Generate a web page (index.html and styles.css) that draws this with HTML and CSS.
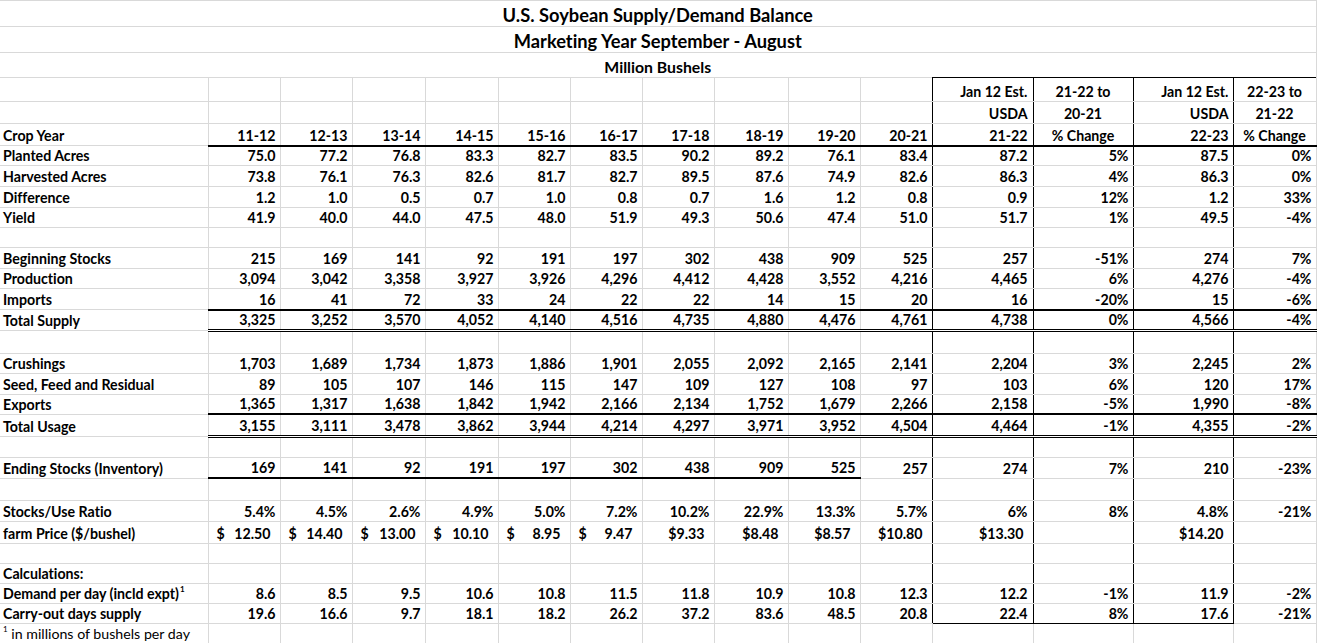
FILE: index.html
```html
<!DOCTYPE html>
<html>
<head>
<meta charset="utf-8">
<title>U.S. Soybean Supply/Demand Balance</title>
<link rel="stylesheet" href="styles.css">
</head>
<body>
<table class="sheet">
<colgroup>
<col class="w208"><col class="w72"><col class="w72"><col class="w73"><col class="w73"><col class="w72"><col class="w72"><col class="w72"><col class="w74"><col class="w72"><col class="w72"><col class="w101"><col class="w100"><col class="w100"><col class="w83">
</colgroup>
<thead>
<tr class="h26 t1"><td colspan="15">U.S. Soybean Supply/Demand Balance</td></tr>
<tr class="h26 t1"><td colspan="15">Marketing Year September - August</td></tr>
<tr class="h25 t3"><td colspan="15">Million Bushels</td></tr>
</thead>
<tbody>
<tr class="bx first h24"><td class="lbl"></td><td></td><td></td><td></td><td></td><td></td><td></td><td></td><td></td><td></td><td></td><td class="pl">Jan 12 Est.</td><td class="c">21-22 to</td><td>Jan 12 Est.</td><td class="c">22-23 to</td></tr>
<tr class="bx h22"><td class="lbl"></td><td></td><td></td><td></td><td></td><td></td><td></td><td></td><td></td><td></td><td></td><td class="pl">USDA</td><td class="c">20-21</td><td>USDA</td><td class="c">21-22</td></tr>
<tr class="bx h22 under"><td class="lbl">Crop Year</td><td>11-12</td><td>12-13</td><td>13-14</td><td>14-15</td><td>15-16</td><td>16-17</td><td>17-18</td><td>18-19</td><td>19-20</td><td>20-21</td><td class="pl">21-22</td><td class="c">% Change</td><td>22-23</td><td class="c">% Change</td></tr>
<tr class="bx h20"><td class="lbl">Planted Acres</td><td>75.0</td><td>77.2</td><td>76.8</td><td>83.3</td><td>82.7</td><td>83.5</td><td>90.2</td><td>89.2</td><td>76.1</td><td>83.4</td><td class="pl">87.2</td><td>5%</td><td>87.5</td><td>0%</td></tr>
<tr class="bx h21"><td class="lbl">Harvested Acres</td><td>73.8</td><td>76.1</td><td>76.3</td><td>82.6</td><td>81.7</td><td>82.7</td><td>89.5</td><td>87.6</td><td>74.9</td><td>82.6</td><td class="pl">86.3</td><td>4%</td><td>86.3</td><td>0%</td></tr>
<tr class="bx h21"><td class="lbl">Difference</td><td>1.2</td><td>1.0</td><td>0.5</td><td>0.7</td><td>1.0</td><td>0.8</td><td>0.7</td><td>1.6</td><td>1.2</td><td>0.8</td><td class="pl">0.9</td><td>12%</td><td>1.2</td><td>33%</td></tr>
<tr class="bx h20"><td class="lbl">Yield</td><td>41.9</td><td>40.0</td><td>44.0</td><td>47.5</td><td>48.0</td><td>51.9</td><td>49.3</td><td>50.6</td><td>47.4</td><td>51.0</td><td class="pl">51.7</td><td>1%</td><td>49.5</td><td>-4%</td></tr>
<tr class="bx h20"><td class="lbl"></td><td></td><td></td><td></td><td></td><td></td><td></td><td></td><td></td><td></td><td></td><td></td><td></td><td></td><td></td></tr>
<tr class="bx h21"><td class="lbl">Beginning Stocks</td><td>215</td><td>169</td><td>141</td><td>92</td><td>191</td><td>197</td><td>302</td><td>438</td><td>909</td><td>525</td><td class="pl">257</td><td>-51%</td><td>274</td><td>7%</td></tr>
<tr class="bx h20"><td class="lbl">Production</td><td>3,094</td><td>3,042</td><td>3,358</td><td>3,927</td><td>3,926</td><td>4,296</td><td>4,412</td><td>4,428</td><td>3,552</td><td>4,216</td><td class="pl">4,465</td><td>6%</td><td>4,276</td><td>-4%</td></tr>
<tr class="bx h21"><td class="lbl">Imports</td><td>16</td><td>41</td><td>72</td><td>33</td><td>24</td><td>22</td><td>22</td><td>14</td><td>15</td><td>20</td><td class="pl">16</td><td>-20%</td><td>15</td><td>-6%</td></tr>
<tr class="bx h20 total"><td class="lbl">Total Supply</td><td>3,325</td><td>3,252</td><td>3,570</td><td>4,052</td><td>4,140</td><td>4,516</td><td>4,735</td><td>4,880</td><td>4,476</td><td>4,761</td><td class="pl">4,738</td><td>0%</td><td>4,566</td><td>-4%</td></tr>
<tr class="bx h23"><td class="lbl"></td><td></td><td></td><td></td><td></td><td></td><td></td><td></td><td></td><td></td><td></td><td></td><td></td><td></td><td></td></tr>
<tr class="bx h20"><td class="lbl">Crushings</td><td>1,703</td><td>1,689</td><td>1,734</td><td>1,873</td><td>1,886</td><td>1,901</td><td>2,055</td><td>2,092</td><td>2,165</td><td>2,141</td><td class="pl">2,204</td><td>3%</td><td>2,245</td><td>2%</td></tr>
<tr class="bx h21"><td class="lbl">Seed, Feed and Residual</td><td>89</td><td>105</td><td>107</td><td>146</td><td>115</td><td>147</td><td>109</td><td>127</td><td>108</td><td>97</td><td class="pl">103</td><td>6%</td><td>120</td><td>17%</td></tr>
<tr class="bx h20"><td class="lbl">Exports</td><td>1,365</td><td>1,317</td><td>1,638</td><td>1,842</td><td>1,942</td><td>2,166</td><td>2,134</td><td>1,752</td><td>1,679</td><td>2,266</td><td class="pl">2,158</td><td>-5%</td><td>1,990</td><td>-8%</td></tr>
<tr class="bx h22 total"><td class="lbl">Total Usage</td><td>3,155</td><td>3,111</td><td>3,478</td><td>3,862</td><td>3,944</td><td>4,214</td><td>4,297</td><td>3,971</td><td>3,952</td><td>4,504</td><td class="pl">4,464</td><td>-1%</td><td>4,355</td><td>-2%</td></tr>
<tr class="bx h21"><td class="lbl"></td><td></td><td></td><td></td><td></td><td></td><td></td><td></td><td></td><td></td><td></td><td></td><td></td><td></td><td></td></tr>
<tr class="bx h21 ending"><td class="lbl">Ending Stocks (Inventory)</td><td>169</td><td>141</td><td>92</td><td>191</td><td>197</td><td>302</td><td>438</td><td>909</td><td>525</td><td>257</td><td class="pl">274</td><td>7%</td><td>210</td><td>-23%</td></tr>
<tr class="bx h22"><td class="lbl"></td><td></td><td></td><td></td><td></td><td></td><td></td><td></td><td></td><td></td><td></td><td></td><td></td><td></td><td></td></tr>
<tr class="bx h21"><td class="lbl">Stocks/Use Ratio</td><td>5.4%</td><td>4.5%</td><td>2.6%</td><td>4.9%</td><td>5.0%</td><td>7.2%</td><td>10.2%</td><td>22.9%</td><td>13.3%</td><td>5.7%</td><td class="pl">6%</td><td>8%</td><td>4.8%</td><td>-21%</td></tr>
<tr class="bx h22"><td class="lbl">farm Price ($/bushel)</td>
<td><div class="acct"><span>$</span><span>12.50</span></div></td>
<td><div class="acct"><span>$</span><span>14.40</span></div></td>
<td><div class="acct"><span>$</span><span>13.00</span></div></td>
<td><div class="acct"><span>$</span><span>10.10</span></div></td>
<td><div class="acct"><span>$</span><span>8.95</span></div></td>
<td><div class="acct"><span>$</span><span>9.47</span></div></td>
<td class="pr">$9.33</td><td class="pr">$8.48</td><td class="pr">$8.57</td><td class="pr">$10.80</td><td class="pr">$13.30</td><td></td><td class="pr">$14.20</td><td></td></tr>
<tr class="bx h20"><td class="lbl"></td><td></td><td></td><td></td><td></td><td></td><td></td><td></td><td></td><td></td><td></td><td></td><td></td><td></td><td></td></tr>
<tr class="bx h20"><td class="lbl">Calculations:</td><td></td><td></td><td></td><td></td><td></td><td></td><td></td><td></td><td></td><td></td><td></td><td></td><td></td><td></td></tr>
<tr class="bx h20"><td class="lbl">Demand per day (incld expt)<span class="sup">1</span></td><td>8.6</td><td>8.5</td><td>9.5</td><td>10.6</td><td>10.8</td><td>11.5</td><td>11.8</td><td>10.9</td><td>10.8</td><td>12.3</td><td class="pl">12.2</td><td>-1%</td><td>11.9</td><td>-2%</td></tr>
<tr class="bx last h20"><td class="lbl">Carry-out days supply</td><td>19.6</td><td>16.6</td><td>9.7</td><td>18.1</td><td>18.2</td><td>26.2</td><td>37.2</td><td>83.6</td><td>48.5</td><td>20.8</td><td class="pl">22.4</td><td>8%</td><td>17.6</td><td>-21%</td></tr>
<tr class="h20 foot"><td class="lbl"><span class="sup">1</span> in millions of bushels per day</td><td></td><td></td><td></td><td></td><td></td><td></td><td></td><td></td><td></td><td></td><td></td><td></td><td></td><td></td></tr>
</tbody>
</table>
</body>
</html>
```

FILE: styles.css
```css
html, body {
  margin: 0;
  padding: 0;
  background: #ffffff;
}

body {
  font-family: Lato, "Liberation Sans", sans-serif;
  font-weight: 700;
  font-size: 14.2px;
  color: #000000;
  font-variant-ligatures: none;
}

.sheet {
  border-collapse: collapse;
  table-layout: fixed;
  width: 1316px;
}

.w208 { width: 208px; }
.w72 { width: 72px; }
.w73 { width: 73px; }
.w74 { width: 74px; }
.w83 { width: 83px; }
.w100 { width: 100px; }
.w101 { width: 101px; }

.h20 { height: 20px; }
.h21 { height: 21px; }
.h22 { height: 22px; }
.h23 { height: 23px; }
.h24 { height: 24px; }
.h25 { height: 25px; }
.h26 { height: 26px; }

.sheet td {
  border: 1px solid #d9d9d9;
  padding: 0 4px 1px 2px;
  text-align: right;
  vertical-align: bottom;
  white-space: nowrap;
  overflow: hidden;
  line-height: 17px;
}

.sheet td.lbl {
  text-align: left;
  padding-left: 3px;
  border-left: none;
}

.sheet td.c { text-align: center; padding-right: 2px; }
.sheet td.pl { padding-right: 5px; }
.sheet td.pr { padding-right: 9px; }

/* title rows */
.t1 td, .t3 td {
  text-align: center;
  border-left: none;
  padding: 0;
}
.t1 td {
  font-size: 18.3px;
  line-height: 21px;
}
.t3 td {
  font-size: 15.8px;
  line-height: 19px;
  padding-bottom: 1px;
  border-bottom: none;
}

/* boxed USDA columns */
.bx td:nth-child(11),
.bx td:nth-child(12),
.bx td:nth-child(13),
.bx td:nth-child(14) {
  border-right: 1px solid #000000;
}
.first td:nth-child(n+12) {
  border-top: 1px solid #000000;
}
.last td:nth-child(n+12):nth-child(-n+14) {
  border-bottom: 1px solid #000000;
}

/* rules */
.under td:nth-child(n+2) {
  border-bottom: 2px solid #000000;
}
.total td:nth-child(n+2) {
  border-top: 2px solid #000000;
  border-bottom: 3px double #000000;
}
.ending td:nth-child(n+2):nth-child(-n+10) {
  border-bottom: 2px solid #000000;
}

/* accounting format */
.acct {
  display: flex;
  justify-content: space-between;
  padding: 0 5px 0 6px;
}

.sup {
  font-size: 8px;
  vertical-align: top;
  line-height: 10px;
  position: relative;
  top: -1px;
  padding-left: 1px;
}

.foot td.lbl {
  font-weight: 400;
}
.foot .sup {
  padding-left: 0;
}
```
